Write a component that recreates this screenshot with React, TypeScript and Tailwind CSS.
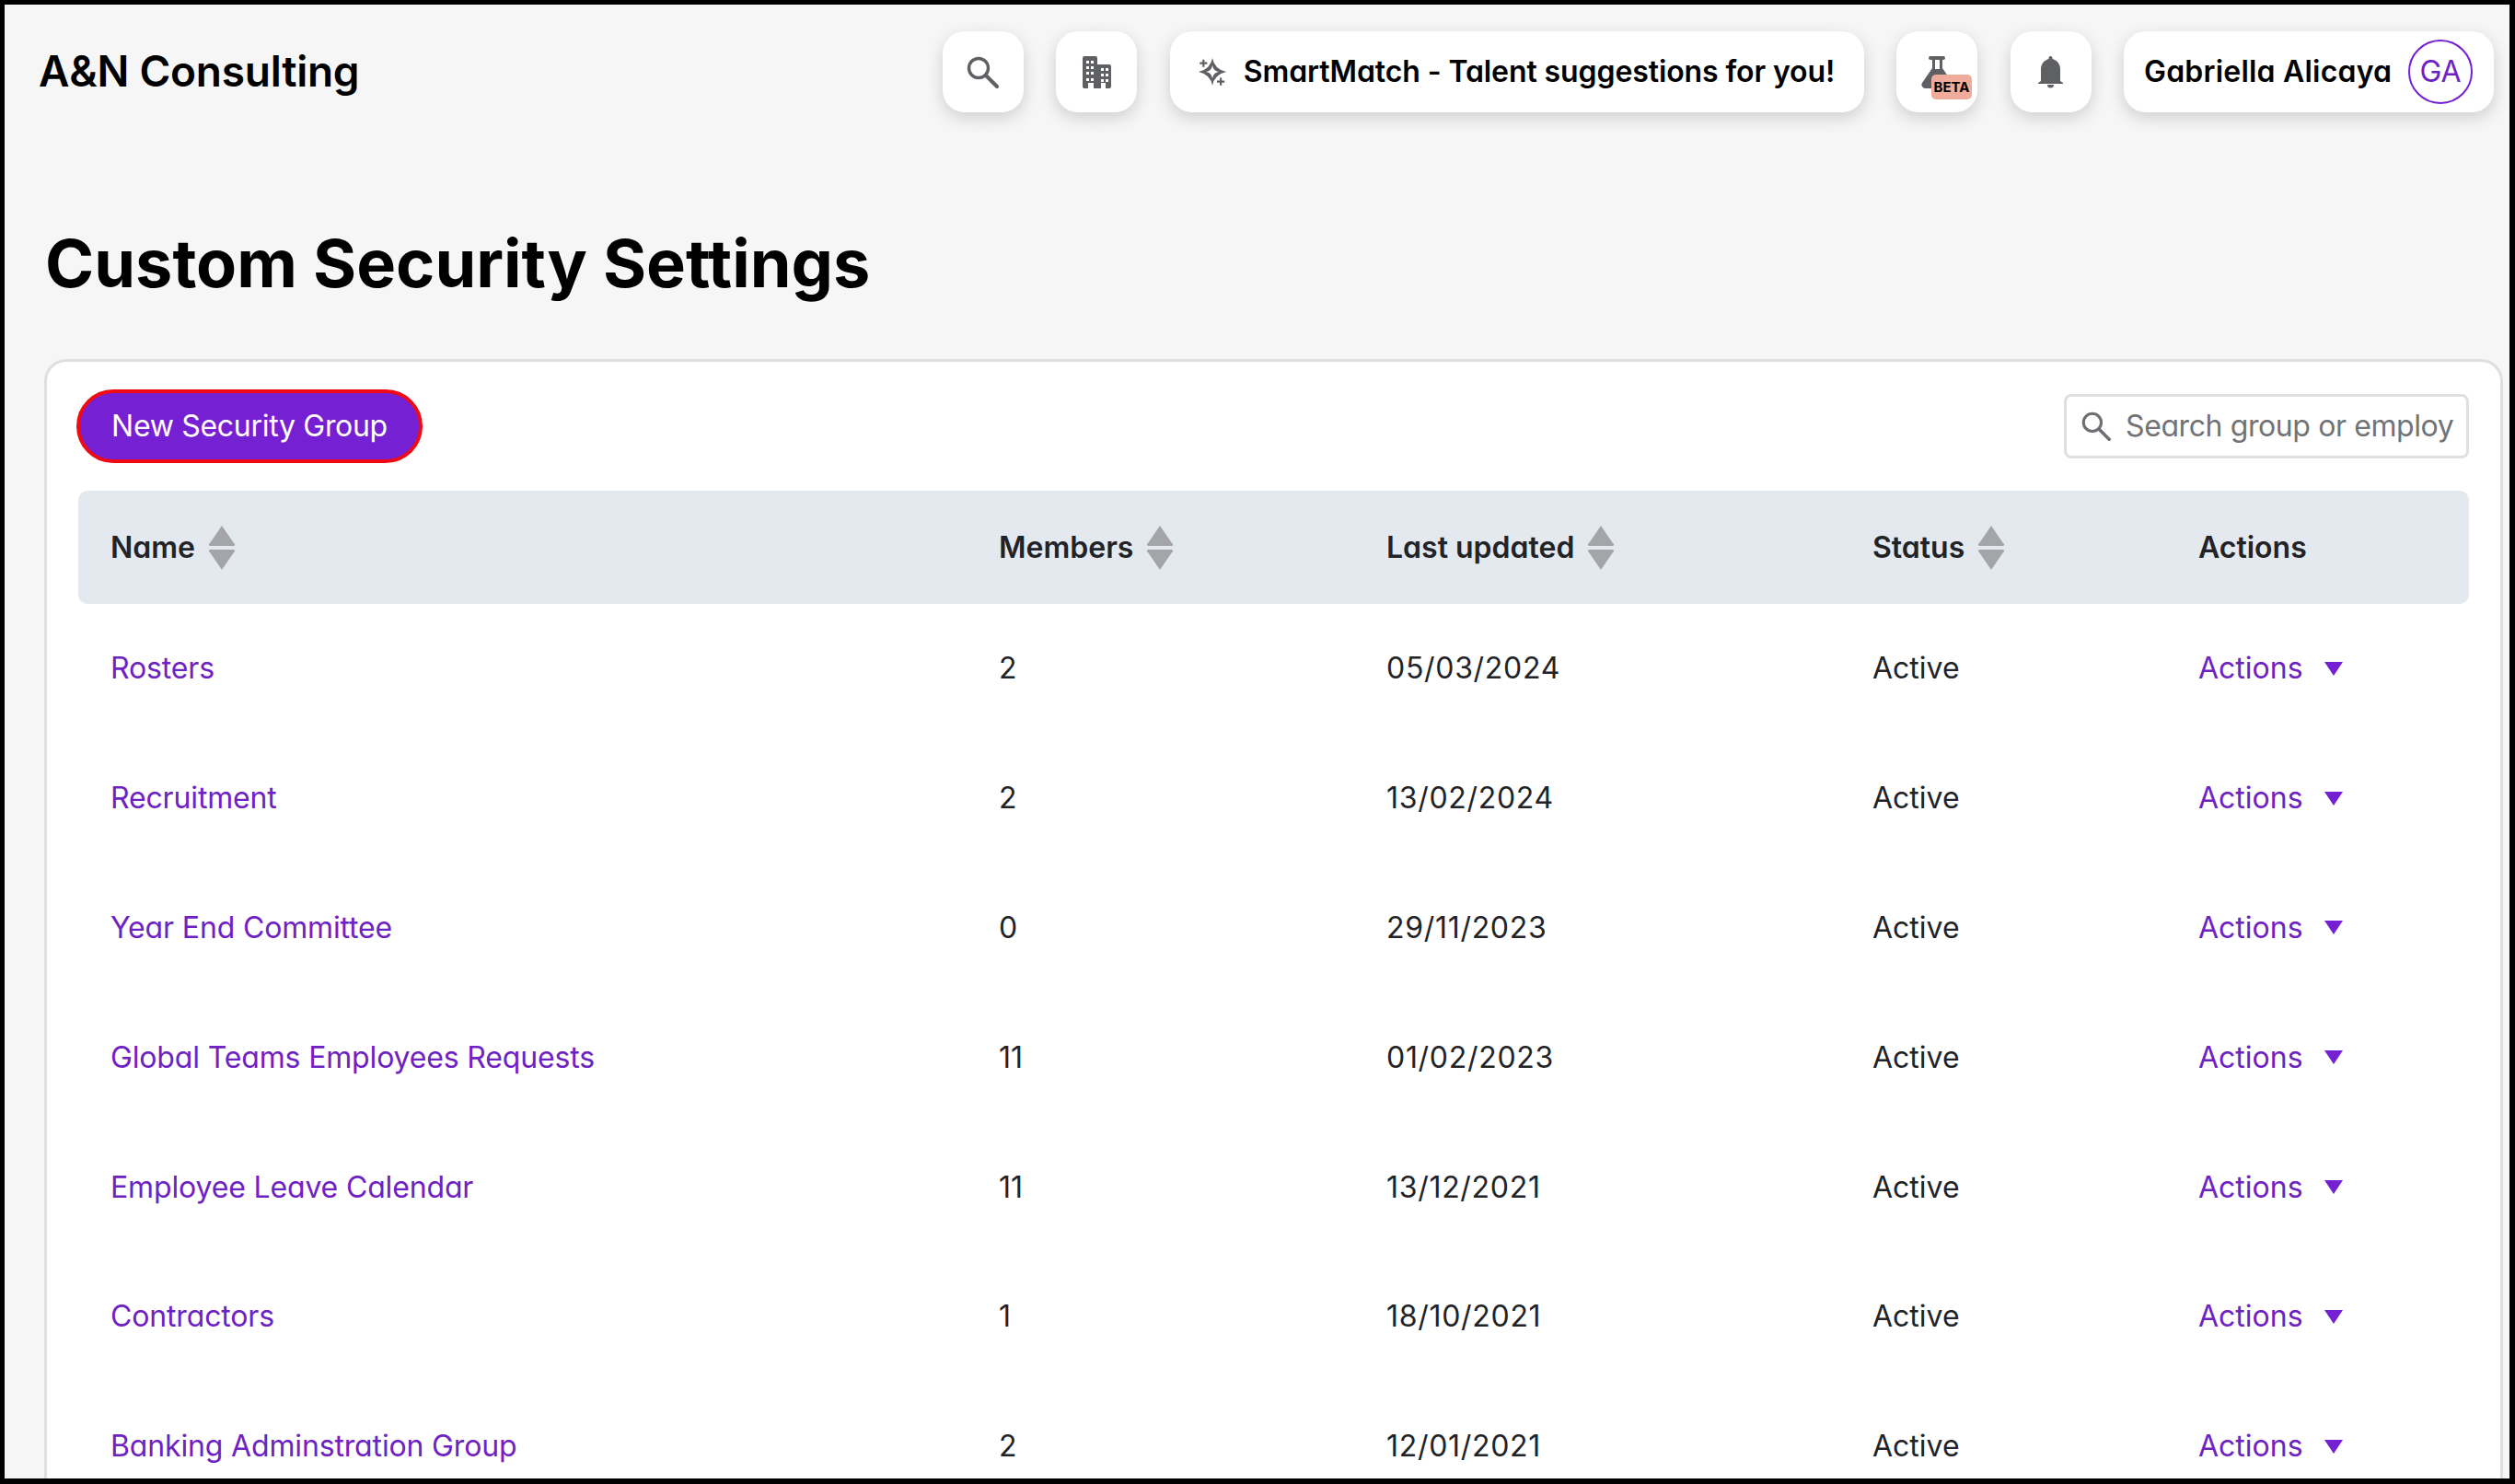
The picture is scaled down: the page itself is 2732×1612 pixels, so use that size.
import React from 'react';

interface Group {
  name: string;
  members: number;
  updated: string;
}

const GROUPS: Group[] = [
  { name: 'Rosters', members: 2, updated: '05/03/2024' },
  { name: 'Recruitment', members: 2, updated: '13/02/2024' },
  { name: 'Year End Committee', members: 0, updated: '29/11/2023' },
  { name: 'Global Teams Employees Requests', members: 11, updated: '01/02/2023' },
  { name: 'Employee Leave Calendar', members: 11, updated: '13/12/2021' },
  { name: 'Contractors', members: 1, updated: '18/10/2021' },
  { name: 'Banking Adminstration Group', members: 2, updated: '12/01/2021' },
];

const COLUMNS = 'grid grid-cols-[965px_421px_528px_354px_1fr]';

const SearchIcon = ({ className }: { className: string }) => (
  <svg viewBox="0 0 35 35" className={className} fill="none" stroke="currentColor">
    <circle cx="13" cy="13" r="10.5" strokeWidth="3.4" />
    <path d="M21 21 L33 33" strokeWidth="4" strokeLinecap="round" />
  </svg>
);

const BuildingIcon = () => (
  <svg viewBox="0 0 31 35" className="w-[31px] h-[35px] text-[#5f6064]" fill="currentColor">
    <path
      fillRule="evenodd"
      d="M2 0h12a2 2 0 0 1 2 2v7h13a2 2 0 0 1 2 2v22a2 2 0 0 1-2 2H2a2 2 0 0 1-2-2V2a2 2 0 0 1 2-2zM4 5v3h3V5zm5 0v3h3V5zM4 11v3h3v-3zm5 0v3h3v-3zM4 17v3h3v-3zm5 0v3h3v-3zM4 24v3h3v-3zm5 0v3h3v-3zM6 29v6h6v-6zm14-16v3h3v-3zm5 0v3h3v-3zm-5 6v3h3v-3zm5 0v3h3v-3zm-5 6v3h3v-3zm5 0v3h3v-3zm-5 4v6h5v-6z"
    />
  </svg>
);

const SparkleIcon = () => (
  <svg viewBox="0 0 30 30" className="w-[30px] h-[30px] text-[#5f6064]" fill="currentColor">
    <path
      fillRule="evenodd"
      d="M15 0 Q17 12 30 15 Q17 18 15 30 Q13 18 0 15 Q13 12 15 0z M15 8 Q14 14 8 15 Q14 16 15 22 Q16 16 22 15 Q16 14 15 8z"
    />
    <path d="M4.200 1.700h2.200v2.900h2.900v2.200H6.400v2.900H4.200V6.800H1.300V4.600h2.900z" />
    <path d="M23 21.500h2.200v3h3v2.200h-3v3H23v-3h-3v-2.200h3z" />
  </svg>
);

const FlaskIcon = () => (
  <svg viewBox="0 0 35 35" className="w-[35px] h-[35px] text-[#5f6064]" fill="currentColor">
    <path d="M10 0h14a1.800 1.800 0 0 1 0 4h-1v9l11 16a4 4 0 0 1-3 6H4a4 4 0 0 1-3-6l11-16V4h-2a1.800 1.800 0 0 1 0-4z" />
    <path d="M15 4h5v10h-5z" fill="#ffffff" />
  </svg>
);

const BellIcon = () => (
  <svg viewBox="0 0 27 35" className="w-[27px] h-[35px] text-[#5f6064]" fill="currentColor">
    <path d="M13.500 0a2 2 0 0 1 2 2v1C21 4.500 24 9 24 14v13l3 2v1H0v-1l3-2V14C3 9 6 4.500 11.500 3V2a2 2 0 0 1 2-2z" />
    <path d="M10 31h7a3.500 3.500 0 0 1-7 0z" />
  </svg>
);

const SortIcon = () => (
  <svg viewBox="0 0 28 48" className="w-[28px] h-[48px] text-[#a3a5a9]" fill="currentColor">
    <path d="M14 0 L27 19 a1.500 1.500 0 0 1-1 3 H2 a1.500 1.500 0 0 1-1-3 Z" />
    <path d="M14 48 L27 29 a1.500 1.500 0 0 0-1-3 H2 a1.500 1.500 0 0 0-1 3 Z" />
  </svg>
);

const Caret = () => (
  <svg viewBox="0 0 20 15" className="w-[20px] h-[15px] text-[#7620d4]" fill="currentColor">
    <path d="M0 0h20L10 15z" />
  </svg>
);

const box = 'flex items-center h-[88px] bg-white rounded-[24px] shadow-[0_6px_18px_rgba(0,0,0,0.16)]';

const HeaderCell = ({ label, sortable = true }: { label: string; sortable?: boolean }) => (
  <div className="flex items-center gap-[15px] text-[32px] font-semibold text-[#212327]">
    <span>{label}</span>
    {sortable && <SortIcon />}
  </div>
);

export default function App() {
  return (
    <div className="h-[1612px] w-full overflow-hidden bg-black pt-[5px] pl-[5px] pr-[6px] pb-[6px] font-['Inter',sans-serif] [font-feature-settings:'cv11']">
      <div className="h-full overflow-hidden bg-[#f6f6f6]">
        <header className="flex items-center justify-between h-[88px] mt-[29px] pl-[37px] pr-[17px]">
          <div className="text-[46px] font-semibold tracking-[-0.25px] text-black -mt-[1px]">A&amp;N Consulting</div>
          <div className="flex items-center gap-[35.5px]">
            <div className={`${box} justify-center w-[88px] text-[#5f6064]`}>
              <SearchIcon className="w-[35px] h-[35px]" />
            </div>
            <div className={`${box} justify-center w-[88px]`}>
              <BuildingIcon />
            </div>
            <div className={`${box} justify-center w-[754px] gap-[19px]`}>
              <SparkleIcon />
              <span className="text-[32px] font-semibold tracking-[-0.1px] text-black whitespace-nowrap">
                SmartMatch - Talent suggestions for you!
              </span>
            </div>
            <div className={`${box} justify-center w-[88px] relative`}>
              <FlaskIcon />
              <span className="absolute left-[38px] top-[47px] w-[44px] h-[27px] rounded-[5px] bg-[#f0ab9a] text-[15px] font-bold leading-[27px] text-center text-black">
                BETA
              </span>
            </div>
            <div className={`${box} justify-center w-[88px]`}>
              <BellIcon />
            </div>
            <div className={`${box} justify-between w-[402px] pl-[22px] pr-[23px]`}>
              <span className="text-[32px] font-semibold tracking-[0.2px] text-black whitespace-nowrap">
                Gabriella Alicaya
              </span>
              <span className="flex items-center justify-center w-[70px] h-[70px] rounded-full border-2 border-[#7620d4] text-[32px] text-[#6e22c4]">
                GA
              </span>
            </div>
          </div>
        </header>

        <h1 className="mt-[119px] ml-[44px] text-[72px] leading-[90px] font-bold text-black">
          Custom Security Settings
        </h1>

        <section className="mt-[59px] ml-[43px] mr-[7px] h-[1300px] bg-white border-[3px] border-[#dfdfe1] rounded-[24px] px-[34px] pt-[30px]">
          <div className="flex items-center justify-between h-[80px]">
            <button className="flex items-center justify-center w-[376px] h-[80px] -ml-[2px] rounded-full border-[4px] border-[#f00a14] bg-[#7620d4] text-[32px] tracking-[-0.3px] text-white">
              New Security Group
            </button>
            <div className="flex items-center gap-[16px] w-[440px] h-[70px] border-[3px] border-[#dfdfe1] rounded-[8px] pl-[16px] overflow-hidden">
              <SearchIcon className="w-[32px] h-[32px] shrink-0 text-[#6e7074]" />
              <span className="text-[32px] tracking-[-0.4px] text-[#717377] whitespace-nowrap">
                Search group or employ
              </span>
            </div>
          </div>

          <div className={`${COLUMNS} items-center h-[123px] mt-[30px] pl-[35px] bg-[#e4e9f0] rounded-[10px]`}>
            <HeaderCell label="Name" />
            <HeaderCell label="Members" />
            <HeaderCell label="Last updated" />
            <HeaderCell label="Status" />
            <HeaderCell label="Actions" sortable={false} />
          </div>

          {GROUPS.map((group) => (
            <div
              key={group.name}
              className={`${COLUMNS} items-center h-[140.8px] pl-[35px] text-[32px] text-[#212327]`}
            >
              <span className="tracking-[-0.15px] text-[#6e22c4]">{group.name}</span>
              <span>{group.members}</span>
              <span className="tracking-[0.7px]">{group.updated}</span>
              <span>Active</span>
              <span className="flex items-center gap-[23px] text-[#6e22c4]">
                Actions
                <Caret />
              </span>
            </div>
          ))}
        </section>
      </div>
    </div>
  );
}
